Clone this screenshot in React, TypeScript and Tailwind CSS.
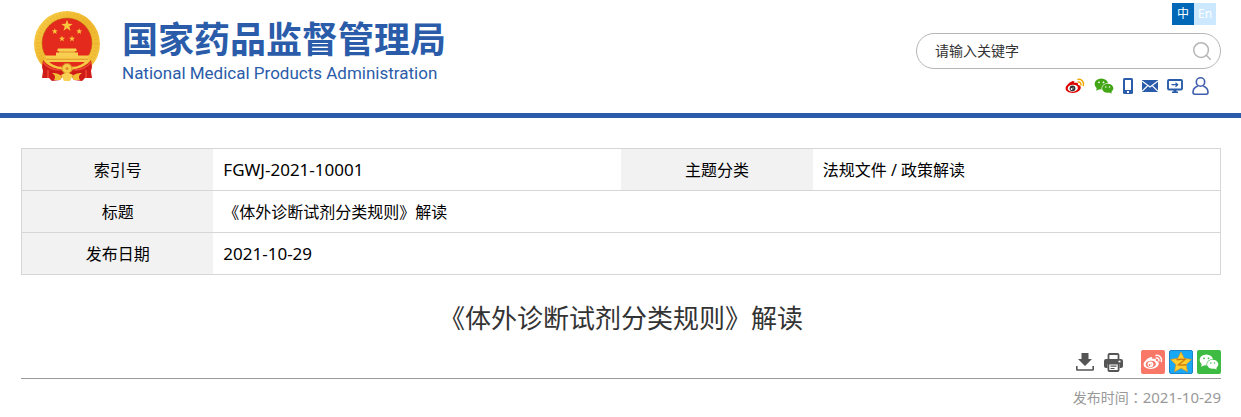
import { Search } from 'lucide-react';

function starPoints(cx: number, cy: number, r: number, inner = 0.4) {
  return Array.from({ length: 10 }, (_, i) => {
    const radius = i % 2 === 0 ? r : r * inner;
    const angle = (Math.PI / 5) * i - Math.PI / 2;
    return `${(cx + radius * Math.cos(angle)).toFixed(2)},${(cy + radius * Math.sin(angle)).toFixed(2)}`;
  }).join(' ');
}

function Emblem() {
  return (
    <svg viewBox="0 0 66 70" className="h-[70px] w-[66px] shrink-0" aria-hidden="true">
      <defs>
        <linearGradient id="gold" x1="0" y1="0" x2="1" y2="1">
          <stop offset="0" stopColor="#f9cf4a" />
          <stop offset="0.5" stopColor="#eeb62c" />
          <stop offset="1" stopColor="#f6c945" />
        </linearGradient>
      </defs>
      <circle cx="33" cy="33" r="33" fill="url(#gold)" />
      <circle cx="33" cy="33" r="29" fill="none" stroke="#d99a1c" strokeWidth="4" strokeDasharray="1 2.4" opacity="0.3" />
      <circle cx="33" cy="32" r="25.4" fill="#c98a1a" />
      <circle cx="33" cy="32" r="24.8" fill="#e42a1d" />
      <path d="M10.5 44.5h45l-3.5 7H14z" fill="#f7cb4b" />
      <path d="M12 48.3h42" stroke="#d78a1c" strokeWidth="0.8" />
      <path d="M24 37.5h18l1 2.5h-2v1.5h3v3.5H22v-3.5h3V40h-2z" fill="#f8cf52" />
      <path d="M24 41h18" stroke="#d9821c" strokeWidth="0.8" />
      <g fill="#f8c63d">
        <polygon points={starPoints(33, 14.8, 6)} />
        <polygon points={starPoints(20.8, 20.4, 3.2)} />
        <polygon points={starPoints(45.2, 20.4, 3.2)} />
        <polygon points={starPoints(28, 27.8, 3.2)} />
        <polygon points={starPoints(38, 27.8, 3.2)} />
      </g>
      <path d="M15 51h36l-5 5H20z" fill="#e42a1d" />
      <path d="M9 49c4 5 9 8 17 9l5 4-5 7-8 1-3-3-7 0 1-7-1-4z" fill="#cf1c18" />
      <path d="M57 49c-4 5-9 8-17 9l-5 4 5 7 8 1 3-3 7 0-1-7 1-4z" fill="#cf1c18" />
      <path d="M9 51c6 8 14 8 17 8M57 51c-6 8-14 8-17 8M14 59v8M52 59v8" fill="none" stroke="#f04a35" strokeWidth="1.4" />
      <path d="M11 49c6 6 11 8 17 8M55 49c-6 6-11 8-17 8" fill="none" stroke="#f6c945" strokeWidth="2.4" />
      <path d="M18 62c5 0 8 1 10 4l-2 3-6 0c2-3 1-5-2-7zM48 62c-5 0-8 1-10 4l2 3 6 0c-2-3-1-5 2-7z" fill="#f2bd35" />
      <circle cx="33" cy="57.5" r="5" fill="#f6cb4a" stroke="#d48c1b" strokeWidth="1.2" strokeDasharray="1.4 0.8" />
      <circle cx="33" cy="57.5" r="1.5" fill="#e08a28" />
      <path d="M27 64q6-4 12 0l-3 6h-6z" fill="#f8d154" />
    </svg>
  );
}

function WeiboIcon({ className, mono = false }: { className: string; mono?: boolean }) {
  const body = mono ? '#fff' : '#dc0000';
  const eye = mono ? '#f87767' : '#fff';
  const wave = mono ? '#fff' : '#f0a800';
  return (
    <svg viewBox="0 0 20 16" className={className} aria-hidden="true">
      <path
        d="M7.2 3.2c1.5-.5 2.5.2 2.1 1.9 2.2-.9 4.2-.6 3.7 1.7 1.6.4 2.8 1.3 2.8 2.8 0 2.8-3.7 5.4-8 5.4S.6 13 .6 10.3C.6 7.7 4.6 4 7.2 3.2z"
        fill={body}
      />
      <ellipse cx="7.8" cy="10.2" rx="5.1" ry="3.5" fill={eye} transform="rotate(-6 7.8 10.2)" />
      <circle cx="7.5" cy="10.3" r="2.9" fill={mono ? '#fff' : '#333'} />
      <circle cx="6.6" cy="11" r="0.9" fill={eye} />
      <circle cx="8.2" cy="9.9" r="0.5" fill={eye} />
      <path d="M13 1.4a4.7 4.7 0 0 1 5.3 6.1M13.3 4a2.2 2.2 0 0 1 2.5 2.9" fill="none" stroke={wave} strokeWidth="1.5" strokeLinecap="round" />
    </svg>
  );
}

function WechatIcon({ className, mono = false }: { className: string; mono?: boolean }) {
  const body = mono ? '#fff' : '#43a616';
  const gap = mono ? '#3dbb42' : '#fff';
  return (
    <svg viewBox="0 0 20 16" className={className} aria-hidden="true">
      <ellipse cx="7.3" cy="6" rx="6.7" ry="5.5" fill={body} />
      <path d="M2.8 9.5l-.6 3.2 3.6-1.7z" fill={body} />
      <ellipse cx="13.7" cy="10.2" rx="6.2" ry="5" fill={gap} />
      <ellipse cx="13.7" cy="10.2" rx="5.6" ry="4.5" fill={body} />
      <path d="M15 14.2l2.6 1.6-.4-2.7z" fill={body} />
      <g fill={gap}>
        <circle cx="5" cy="4.3" r="0.9" />
        <circle cx="9.5" cy="4.3" r="0.9" />
        <circle cx="11.8" cy="8.9" r="0.75" />
        <circle cx="15.5" cy="8.9" r="0.75" />
      </g>
    </svg>
  );
}

function PhoneIcon() {
  return (
    <svg viewBox="0 0 10 16" className="h-4 w-[10px]" aria-hidden="true">
      <rect width="10" height="16" rx="1.5" fill="#2a5caa" />
      <rect x="2" y="2" width="6" height="10" fill="#fff" />
      <rect x="4" y="13" width="2" height="2" fill="#fff" />
    </svg>
  );
}

function MailIcon() {
  return (
    <svg viewBox="0 0 16 12" className="h-3 w-4" aria-hidden="true">
      <rect width="16" height="12" fill="#2a5caa" />
      <path d="M0 1l8 6 8-6M0 11.3L5.5 6M16 11.3L10.5 6" fill="none" stroke="#fff" strokeWidth="1.1" />
    </svg>
  );
}

function MonitorIcon() {
  return (
    <svg viewBox="0 0 16 14" className="h-[14px] w-4" aria-hidden="true">
      <rect x="1" y="1" width="14" height="9.5" rx="1" fill="none" stroke="#2a5caa" strokeWidth="1.9" />
      <path d="M4.5 5.7h6M8.5 3.6l2.2 2.1-2.2 2.1" fill="none" stroke="#2a5caa" strokeWidth="1.2" />
      <path d="M6.5 11h3v1.5h1.5V14H5v-1.5h1.5z" fill="#2a5caa" />
    </svg>
  );
}

function UserIcon() {
  return (
    <svg viewBox="0 0 17 18" className="h-[18px] w-[17px]" fill="none" stroke="#3f5fae" strokeWidth="1.6" aria-hidden="true">
      <circle cx="8.5" cy="5" r="4.2" />
      <path d="M5.8 9C3 10 1 12.5 1 15.3c0 1.2.5 1.9 1.8 1.9h11.4c1.3 0 1.8-.7 1.8-1.9 0-2.8-2-5.3-4.8-6.3" />
    </svg>
  );
}

function DownloadIcon() {
  return (
    <svg viewBox="0 0 18 18" className="h-[18px] w-[18px]" fill="#555" aria-hidden="true">
      <path d="M5.5 0h7v6H16l-7 7-7-7h3.5z" />
      <path d="M.8 13v3.5q0 .5.5.5h15.4q.5 0 .5-.5V13" fill="none" stroke="#555" strokeWidth="1.6" />
    </svg>
  );
}

function PrintIcon() {
  return (
    <svg viewBox="0 0 19 19" className="h-[19px] w-[19px]" aria-hidden="true">
      <path d="M4.5 6.5V2q0-1 1-1h8q1 0 1 1v4.5" fill="#fff" stroke="#555" strokeWidth="1.8" />
      <path d="M2 6h15q2 0 2 2v5q0 2-2 2h-1.5v-4h-12v4H2q-2 0-2-2V8q0-2 2-2z" fill="#555" />
      <rect x="4.4" y="10.5" width="10.2" height="7.5" rx="1" fill="#fff" stroke="#555" strokeWidth="1.8" />
      <path d="M6.5 13.2h6M6.5 15.5h4" stroke="#555" strokeWidth="1.2" />
      <rect x="14.5" y="7.7" width="2" height="1.6" fill="#fff" />
    </svg>
  );
}

function QzoneIcon() {
  return (
    <svg viewBox="0 0 24 24" className="h-6 w-6 shrink-0" aria-hidden="true">
      <polygon points={starPoints(12, 12.8, 11, 0.5)} fill="#fdd02f" stroke="#d88a1a" strokeWidth="0.6" strokeLinejoin="round" />
      <path d="M7.5 9.8q4-1 8.5-.3l-6.5 5.3q3.5.6 7.5-.1" fill="none" stroke="#cf7a12" strokeWidth="1.4" />
    </svg>
  );
}

const headerLinks = [
  { label: '微博', icon: <WeiboIcon className="h-4 w-5" /> },
  { label: '微信', icon: <WechatIcon className="h-4 w-5" /> },
  { label: '手机', icon: <PhoneIcon /> },
  { label: '邮箱', icon: <MailIcon /> },
  { label: '电脑', icon: <MonitorIcon /> },
  { label: '用户', icon: <UserIcon /> },
];

const labelCell = 'w-[16%] bg-[#f2f2f2] text-center font-normal';
const valueCell = 'px-[10px]';

export default function App() {
  return (
    <div className="bg-white font-['Noto_Sans','Noto_Sans_CJK_SC',sans-serif] text-black">
      <header className="flex justify-between border-b-[5px] border-[#2a5caa] pb-[17px] pl-[34px] pr-5">
        <a href="#" className="flex items-start gap-[22px] pt-[11px] text-[#2a5caa]">
          <Emblem />
          <div>
            <div className="whitespace-nowrap font-['Noto_Sans_CJK_SC',sans-serif] text-[36px] font-bold leading-[52px]">国家药品监督管理局</div>
            <div className="whitespace-nowrap font-['Roboto',sans-serif] text-[17px] leading-5">
              National Medical Products Administration
            </div>
          </div>
        </a>

        <div className="w-[305px] shrink-0 pt-[3px]">
          <div className="mr-[5px] flex justify-end text-xs">
            <a href="#" className="flex h-[22px] w-[22px] items-center justify-center bg-[#0068b7] text-white">中</a>
            <a href="#" className="flex h-[22px] w-[22px] items-center justify-center bg-[#cce8ff] text-white">En</a>
          </div>
          <form className="mt-2 flex h-9 items-center rounded-full border border-[#b5b5b5] pl-[18px] pr-[7px]">
            <input
              type="text"
              aria-label="请输入关键字"
              placeholder="请输入关键字"
              className="min-w-0 flex-1 bg-transparent text-sm outline-none placeholder:text-[#333]"
            />
            <button type="button" aria-label="搜索" className="text-[#b5b5b5]">
              <Search className="h-[22px] w-[22px]" strokeWidth={1.7} />
            </button>
          </form>
          <nav className="mr-3 mt-[7px] flex h-5 items-center justify-end gap-[9px]">
            {headerLinks.map((link) => (
              <a key={link.label} href="#" aria-label={link.label}>
                {link.icon}
              </a>
            ))}
          </nav>
        </div>
      </header>

      <main className="pl-[21px] pr-5 pt-[30px]">
        <table className="w-full table-fixed border-collapse border border-[#d6d6d6] text-base">
          <tbody>
            <tr className="h-[42px] border-b border-[#d6d6d6]">
              <th scope="row" className={labelCell}>索引号</th>
              <td className={`${valueCell} w-[34%] text-[17px]`}>FGWJ-2021-10001</td>
              <th scope="row" className={labelCell}>主题分类</th>
              <td className={`${valueCell} w-[34%]`}>法规文件 / 政策解读</td>
            </tr>
            <tr className="h-[42px] border-b border-[#d6d6d6]">
              <th scope="row" className={labelCell}>标题</th>
              <td colSpan={3} className={valueCell}>《体外诊断试剂分类规则》解读</td>
            </tr>
            <tr className="h-[42px]">
              <th scope="row" className={labelCell}>发布日期</th>
              <td colSpan={3} className={`${valueCell} text-[17px]`}>2021-10-29</td>
            </tr>
          </tbody>
        </table>

        <h1 className="mt-[23px] text-center text-[26px] leading-10 text-[#333]">《体外诊断试剂分类规则》解读</h1>

        <div className="mt-3 flex items-center justify-end gap-1 border-b border-[#999] pb-1">
          <button type="button" aria-label="下载" className="mr-[6px]">
            <DownloadIcon />
          </button>
          <button type="button" aria-label="打印" className="mr-[14px]">
            <PrintIcon />
          </button>
          <a href="#" aria-label="分享到微博" className="flex h-6 w-6 items-center justify-center rounded-xs bg-[#f87767]">
            <WeiboIcon className="h-4 w-5" mono />
          </a>
          <a href="#" aria-label="分享到QQ空间" className="flex h-6 w-6 items-center justify-center rounded-xs border border-[#1b84c9] bg-[#19a8f5]">
            <QzoneIcon />
          </a>
          <a href="#" aria-label="分享到微信" className="flex h-6 w-6 items-center justify-center rounded-xs bg-[#3dbb42]">
            <WechatIcon className="h-4 w-5" mono />
          </a>
        </div>
        <p className="mt-2 text-right text-sm text-[#999]">
          发布时间<span className="font-['Noto_Sans_CJK_TC',sans-serif]" lang="zh-TW">：</span>
          <time dateTime="2021-10-29" className="text-[15px]">2021-10-29</time>
        </p>
      </main>
    </div>
  );
}
